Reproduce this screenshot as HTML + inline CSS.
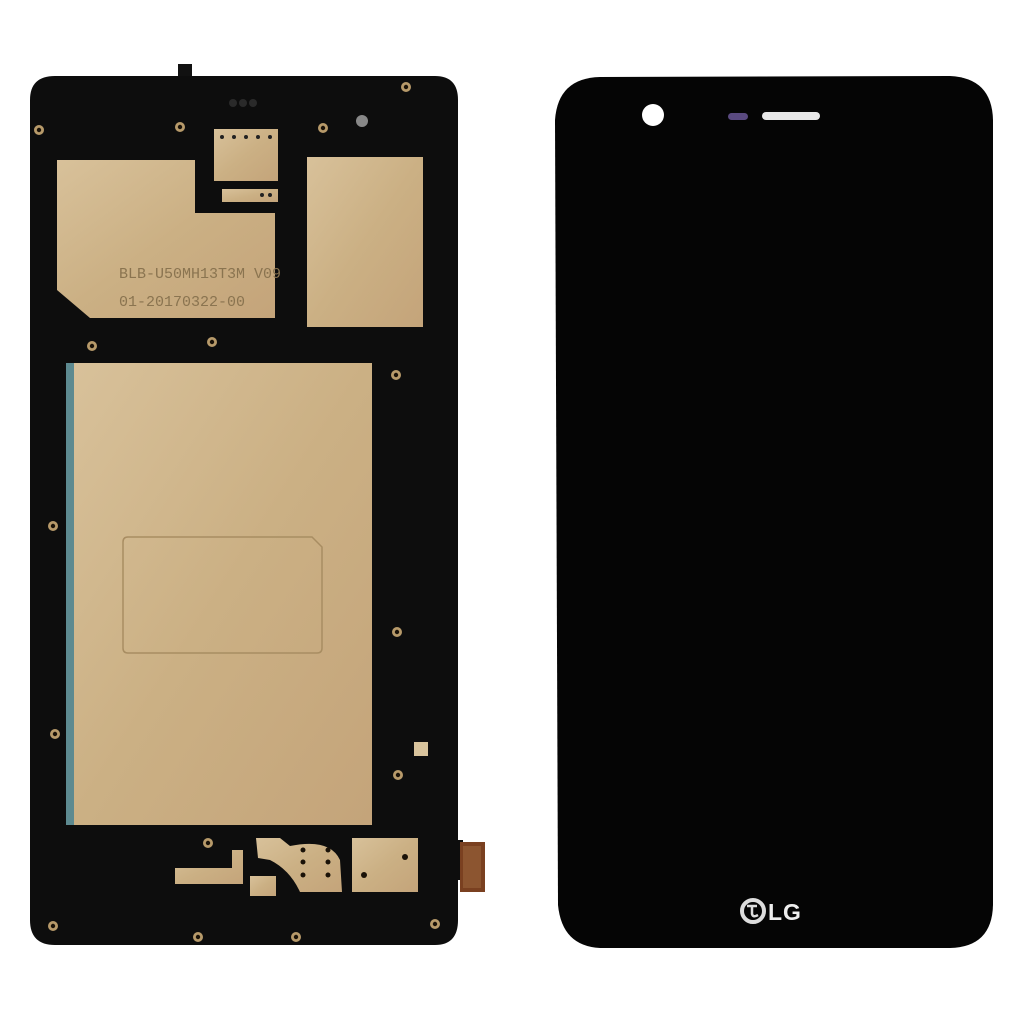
<!DOCTYPE html>
<html><head><meta charset="utf-8"><style>
html,body{margin:0;padding:0;background:#fff;width:1024px;height:1024px;overflow:hidden}
</style></head><body>
<svg width="1024" height="1024" viewBox="0 0 1024 1024" xmlns="http://www.w3.org/2000/svg">
<defs>
<linearGradient id="g" x1="0" y1="0" x2="1" y2="1">
<stop offset="0" stop-color="#d8c19a"/><stop offset="0.5" stop-color="#cbb084"/><stop offset="1" stop-color="#c4a47a"/>
</linearGradient>
<g id="s"><circle r="5" fill="#b79a6a"/><circle r="2.2" fill="#1a1208"/></g>
</defs>
<rect width="1024" height="1024" fill="#fff"/>
<rect x="178" y="64" width="14" height="20" fill="#111"/>
<path d="M30 100 Q30 76 55 76 L435 76 Q458 76 458 100 L458 920 Q458 945 435 945 L55 945 Q30 945 30 920 Z" fill="#0d0d0d"/>
<rect x="455" y="840" width="8" height="40" fill="#0d0d0d"/>
<rect x="460" y="842" width="25" height="50" fill="#7a4020"/>
<rect x="463" y="846" width="18" height="42" fill="#8c5530"/>
<path d="M57 160 L195 160 L195 213 L275 213 L275 318 L90 318 L57 290 Z" fill="url(#g)"/>
<rect x="214" y="129" width="64" height="52" fill="url(#g)"/>
<rect x="222" y="189" width="56" height="13" fill="url(#g)"/>
<rect x="307" y="157" width="116" height="170" fill="url(#g)"/>
<g fill="#222"><circle cx="222" cy="137" r="2"/><circle cx="234" cy="137" r="2"/><circle cx="246" cy="137" r="2"/><circle cx="258" cy="137" r="2"/><circle cx="270" cy="137" r="2"/><circle cx="262" cy="195" r="2"/><circle cx="270" cy="195" r="2"/></g>
<g fill="#2a2a2a"><circle cx="233" cy="103" r="4"/><circle cx="243" cy="103" r="4"/><circle cx="253" cy="103" r="4"/></g>
<circle cx="362" cy="121" r="6" fill="#888"/>
<text x="119" y="278" font-family="Liberation Mono, monospace" font-size="15" fill="#8a7450">BLB-U50MH13T3M  V09</text>
<text x="119" y="306" font-family="Liberation Mono, monospace" font-size="15" fill="#8a7450">01-20170322-00</text>
<rect x="66" y="363" width="8" height="462" fill="#5d8a90"/>
<rect x="74" y="363" width="298" height="462" fill="url(#g)"/>
<path d="M128 537 L312 537 L322 547 L322 648 Q322 653 317 653 L128 653 Q123 653 123 648 L123 542 Q123 537 128 537 Z" fill="none" stroke="#a88d62" stroke-width="1.5"/>
<rect x="414" y="742" width="14" height="14" fill="#d8c39c"/>
<path d="M175 868 L232 868 L232 850 L243 850 L243 884 L175 884 Z" fill="url(#g)"/>
<rect x="250" y="876" width="26" height="20" fill="url(#g)"/>
<path d="M256 838 L280 838 L290 846 Q330 838 340 860 L342 892 L300 892 Q290 870 270 860 L258 858 Z" fill="url(#g)"/>
<rect x="352" y="838" width="66" height="54" fill="url(#g)"/>
<g fill="#1a1208"><circle cx="303" cy="850" r="2.5"/><circle cx="328" cy="850" r="2.5"/><circle cx="303" cy="862" r="2.5"/><circle cx="328" cy="862" r="2.5"/><circle cx="303" cy="875" r="2.5"/><circle cx="328" cy="875" r="2.5"/><circle cx="364" cy="875" r="3"/><circle cx="405" cy="857" r="3"/></g>
<use href="#s" x="406" y="87"/><use href="#s" x="39" y="130"/><use href="#s" x="180" y="127"/><use href="#s" x="323" y="128"/>
<use href="#s" x="92" y="346"/><use href="#s" x="212" y="342"/><use href="#s" x="396" y="375"/>
<use href="#s" x="53" y="526"/><use href="#s" x="397" y="632"/><use href="#s" x="55" y="734"/><use href="#s" x="398" y="775"/>
<use href="#s" x="208" y="843"/><use href="#s" x="53" y="926"/><use href="#s" x="198" y="937"/><use href="#s" x="296" y="937"/><use href="#s" x="435" y="924"/>
<path d="M555 120 Q558 78 600 77 L950 76 Q992 78 993 120 L993 905 Q992 947 950 948 L600 948 Q562 946 558 905 Z" fill="#050505"/>
<circle cx="653" cy="115" r="11" fill="#fff"/>
<rect x="728" y="113" width="20" height="7" rx="3.5" fill="#5a4a80"/>
<rect x="762" y="112" width="58" height="8" rx="4" fill="#e8e8e8"/>
<circle cx="753" cy="911" r="11" fill="none" stroke="#ddd" stroke-width="4"/>
<path d="M747 906 L757 906 M752 906 L752 914 Q753 918 758 915" stroke="#ddd" stroke-width="2.5" fill="none"/>
<text x="768" y="920" font-family="Liberation Sans, sans-serif" font-weight="bold" font-size="23" letter-spacing="1" fill="#eee">LG</text>
</svg>
</body></html>
